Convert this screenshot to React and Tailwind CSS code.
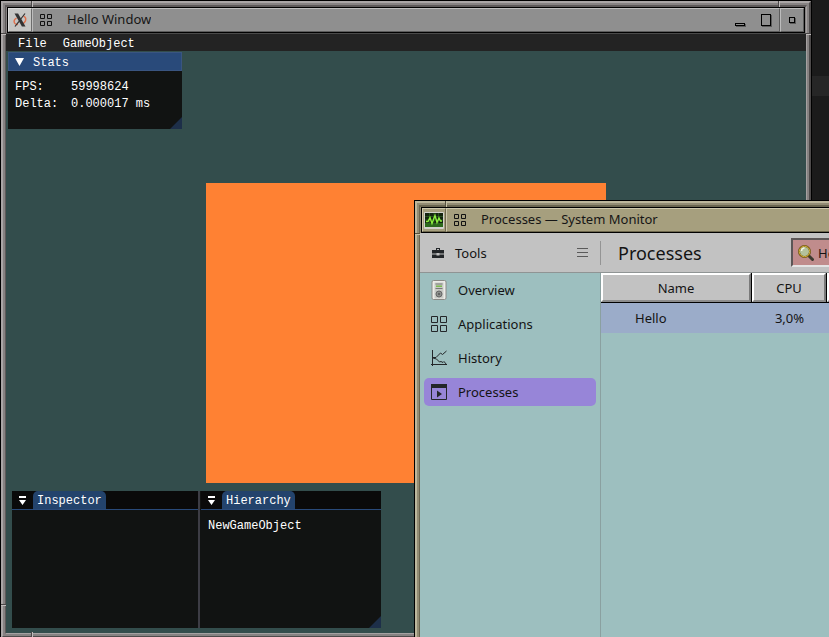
import React from "react";

const UI = "font-['Noto_Sans',sans-serif]";
const MONO = "font-['Liberation_Mono',monospace]";

const GREY = {
  frame: "bg-[#868282] border-t-[#aaa6a6] border-l-[#aaa6a6] border-r-[#4e4b4b] border-b-[#4e4b4b]",
  inner: "border-t-[#5e5a5a] border-l-[#5e5a5a] border-r-[#a5a1a1] border-b-[#a5a1a1]",
  bar: "bg-[#8f8f8f] border-t-[#bcbcbc] border-l-[#bcbcbc] border-r-[#5c5c5c] border-b-[#5c5c5c]",
  menu: "bg-[#c6c6c4] border-t-[#dcdcdc] border-l-[#dcdcdc] border-r-[#6c6c6c] border-b-[#6c6c6c]",
  light: "bg-[#c0bcbc]",
  dark: "bg-[#4a4747]",
};

const OLIVE = {
  frame: "bg-[#928c74] border-t-[#bdb79c] border-l-[#bdb79c] border-r-[#57523f] border-b-[#57523f]",
  inner: "border-t-[#6b6650] border-l-[#6b6650] border-r-[#b5ae91] border-b-[#b5ae91]",
  bar: "bg-[#a69f7e] border-t-[#cfc9ad] border-l-[#cfc9ad] border-r-[#6e684e] border-b-[#6e684e]",
  menu: "bg-[#a69f7e] border-t-[#cfc9ad] border-l-[#cfc9ad] border-r-[#6e684e] border-b-[#6e684e]",
  light: "bg-[#c8c2a6]",
  dark: "bg-[#57523f]",
};

function Notch({ theme, vertical, className }) {
  return (
    <span className={`absolute flex ${vertical ? "h-[6px] w-[2px]" : "h-[2px] w-[5px] flex-col"} ${className}`}>
      <i className={`flex-1 ${theme.dark}`} />
      <i className={`flex-1 ${theme.light}`} />
    </span>
  );
}

function GridGlyph() {
  return (
    <svg className="ml-[7px] h-3 w-3 shrink-0" viewBox="0 0 12 12" fill="none" stroke="#111" aria-hidden="true">
      <path d="M.5.5h4v4h-4zM7.5.5h4v4h-4zM.5 7.5h4v4h-4zM7.5 7.5h4v4h-4z" />
    </svg>
  );
}

function Window({ theme, className, icon, title, controls, children }) {
  return (
    <section aria-label={title} className={`absolute flex flex-col border border-black ${className}`}>
      <div className={`flex min-h-0 flex-1 flex-col border-2 ${theme.frame}`}>
        <div className="flex min-h-0 flex-1 flex-col p-[2px]">
          <div className={`flex min-h-0 flex-1 flex-col border-x border-b border-t-2 ${theme.inner}`}>
            <header className="mx-px flex h-[26px] shrink-0 border border-black">
              <button aria-label="Window menu" className={`flex w-6 shrink-0 items-center justify-center border ${theme.menu}`}>
                {icon}
              </button>
              <div className={`flex min-w-0 flex-1 items-center border ${theme.bar}`}>
                <GridGlyph />
                <h1 className="ml-[15px] truncate pb-[2px] text-[13px] leading-5 text-[#161616]">{title}</h1>
                {controls}
              </div>
              {controls && (
                <button aria-label="Close" className={`flex w-6 items-center justify-center border ${theme.bar}`}>
                  <i className="h-[6px] w-[6px] border border-black shadow-[1px_1px_0_#5a5a5a]" />
                </button>
              )}
            </header>
            {children}
          </div>
        </div>
      </div>
      <Notch theme={theme} vertical className="left-[30px] top-0" />
      <Notch theme={theme} className="left-0 top-8" />
      <Notch theme={theme} vertical className="right-[31px] top-0" />
      <Notch theme={theme} className="right-0 top-8" />
      <Notch theme={theme} vertical className="bottom-0 left-[30px]" />
      <Notch theme={theme} className="bottom-8 left-0" />
    </section>
  );
}

function XLogo() {
  return (
    <svg className="h-4 w-4" viewBox="0 0 16 16" aria-hidden="true">
      <path d="M4.500 6C1 8 1.200 12.500 6 12.500M11.500 4.200C15 5.500 14.500 10.500 9.500 12.300" fill="none" stroke="#e0714d" strokeWidth="1.400" />
      <path d="M2.500 1.500h3.600l7.400 13H9.900z" fill="#333" />
      <path d="M13 1.500 8.800 7M7 9.300 3 14.500" stroke="#333" strokeWidth="1.200" />
    </svg>
  );
}

function MonitorLogo() {
  return (
    <svg className="h-[17px] w-5 shrink-0" viewBox="0 0 20 17" aria-hidden="true">
      <rect width="20" height="17" rx="1" fill="#d2d2cc" />
      <rect x="1" y="1" width="18" height="14" fill="#14240f" />
      <path d="M1 11h18v4H1z" fill="#2c6a1b" />
      <path d="M1 4.500h18M1 8h18M1 11.500h18M5.500 1v14M10 1v14M14.500 1v14" stroke="#2f6322" strokeWidth=".7" />
      <path d="M2 9.500h2l2-4 2 6 3-8 2 7 2-4.500 1.500 3H18" fill="none" stroke="#8cf03f" strokeWidth="1.400" />
    </svg>
  );
}

function TabTriangle() {
  return (
    <svg className="h-[9px] w-[7px]" viewBox="0 0 7 9" fill="#fff" aria-hidden="true">
      <path d="M0 0h7v2H0zM0 4h7L3.500 9z" />
    </svg>
  );
}

function DockPanel({ title, className, children }) {
  return (
    <section className={`relative bg-[#111312] ${className}`}>
      <div className="flex h-[19px] items-center border-b border-[#294a7a] bg-[#0a0a0a] pl-[7px]">
        <button aria-label={`${title} options`}><TabTriangle /></button>
        <button className="ml-[7px] h-[18px] rounded-t-[5px] bg-[#23436c] px-1 pt-[2px] leading-4">{title}</button>
      </div>
      {children}
    </section>
  );
}

function Grip() {
  return (
    <svg className="absolute bottom-0 right-0 h-3 w-3" viewBox="0 0 12 12" aria-hidden="true">
      <path d="M12 0v12H0z" fill="#1d2f49" />
    </svg>
  );
}

function HelloWindow() {
  return (
    <Window
      theme={GREY}
      title="Hello Window"
      className="-bottom-[2px] left-0 right-[17px] top-0"
      icon={<XLogo />}
      controls={
        <div className="ml-auto flex h-full items-center gap-4 pr-2">
          <button aria-label="Minimize" className="flex h-3 items-end">
            <i className="h-[3px] w-[10px] border border-black shadow-[1px_1px_0_#5a5a5a]" />
          </button>
          <button aria-label="Maximize">
            <i className="block h-3 w-[10px] border border-black shadow-[1px_1px_0_#5a5a5a]" />
          </button>
        </div>
      }
    >
      <div className={`relative flex min-h-0 flex-1 items-center justify-center overflow-hidden bg-[#334d4c] text-[12px] text-white ${MONO}`}>
        <div className="h-[300px] w-[400px] bg-[#ff8133]" />

        <nav className="absolute inset-x-0 top-0 flex h-[18px] items-center gap-4 border-t border-[#4a4a4a] bg-[#232323] px-3 pt-[2px]">
          <button>File</button>
          <button>GameObject</button>
        </nav>

        <section className="absolute left-[2px] top-[19px] h-[77px] w-[174px] bg-[#111312]">
          <div className="flex h-[19px] items-center gap-[9px] border border-[#3a5580] bg-[#294a7a] pl-[6px]">
            <svg className="h-2 w-[9px]" viewBox="0 0 9 8" fill="#fff" aria-hidden="true"><path d="M0 0h9L4.500 8z" /></svg>
            <h2 className="pt-[2px] leading-4">Stats</h2>
          </div>
          <dl className="grid grid-cols-[56px_1fr] px-[7px] pt-2 leading-[17px]">
            <dt>FPS:</dt><dd>59998624</dd>
            <dt>Delta:</dt><dd>0.000017 ms</dd>
          </dl>
          <Grip />
        </section>

        <div className="absolute bottom-[5px] left-[6px] flex h-[137px]">
          <DockPanel title="Inspector" className="w-[186px]" />
          <div className="w-[3px] border-r border-[#111312] bg-[#3d3d45]" />
          <DockPanel title="Hierarchy" className="w-[180px]">
            <p className="px-[7px] pt-[7px] leading-[18px]">NewGameObject</p>
            <Grip />
          </DockPanel>
        </div>
      </div>
    </Window>
  );
}

const NAV = [
  {
    label: "Overview",
    icon: (
      <svg className="h-5 w-4" viewBox="0 0 16 20" aria-hidden="true">
        <rect x="1" y=".5" width="14" height="19" rx="1.500" fill="#ecece8" stroke="#8a8a86" />
        <rect x="3.500" y="2.500" width="9" height="16" fill="#c9cbc6" />
        <path d="M4.500 4h7M4.500 8.500h7" stroke="#777" />
        <path d="M5 6.200h6" stroke="#79b94a" strokeWidth="1.500" />
        <circle cx="8" cy="14" r="3" fill="#8d908c" stroke="#666" />
        <circle cx="8" cy="14" r="1" fill="#555" />
      </svg>
    ),
  },
  {
    label: "Applications",
    icon: (
      <svg className="h-4 w-4" viewBox="0 0 16 16" fill="none" stroke="#232629" aria-hidden="true">
        <path d="M.5.5h6v6h-6zM9.500.5h6v6h-6zM.5 9.500h6v6h-6zM9.500 9.500h6v6h-6z" />
      </svg>
    ),
  },
  {
    label: "History",
    icon: (
      <svg className="h-4 w-4" viewBox="0 0 16 16" fill="none" stroke="#232629" aria-hidden="true">
        <path d="M1.500 0v16M0 14.500h16M2 7.500h3l4.500-4.500 2 1.500L15.500 1M2 8l3.500 1 3 3 1.500-.5 2 1 1-1 2.500 3" />
      </svg>
    ),
  },
  {
    label: "Processes",
    active: true,
    icon: (
      <svg className="h-4 w-4" viewBox="0 0 16 16" aria-hidden="true">
        <path d="M.5.5h15v15H.5z" fill="none" stroke="#232629" />
        <path d="M0 0h16v4H0zM6 6.500l5 3.500-5 3.500z" fill="#232629" />
      </svg>
    ),
  },
];

const HEAD = "h-[30px] border-b border-r border-black p-0 font-normal";
const HEAD_IN =
  "flex h-[29px] items-center justify-center border-2 border-b-[#8c8c8c] border-l-white border-r-[#7a7a7a] border-t-white bg-[#c2c2c2] pt-[2px]";

function SystemMonitor() {
  return (
    <Window
      theme={OLIVE}
      title="Processes — System Monitor"
      className="-bottom-10 -right-[200px] left-[414px] top-[200px]"
      icon={<MonitorLogo />}
    >
      <div className="flex min-h-0 flex-1 flex-col bg-[#9dbfbf] text-[13px] text-[#141414]">
        <div className="flex h-10 shrink-0 items-center border-b border-[#8f9494] bg-[#c2c2c2]">
          <div className="flex h-6 w-[181px] shrink-0 items-center border-r border-[#949494] px-3">
            <svg className="h-3 w-3" viewBox="0 0 12 12" fill="#232629" aria-hidden="true">
              <path d="M4 1h4v2h4v3.500H7.500V6h-3v.5H0V3h4zM5 2v1h2V2zM0 7.500h4.500v1h3v-1H12V11H0z" fillRule="evenodd" />
            </svg>
            <span className="ml-[11px] pt-[2px]">Tools</span>
            <button aria-label="Menu" className="ml-auto">
              <svg className="h-[11px] w-[11px]" viewBox="0 0 11 11" stroke="#5a5a5a" aria-hidden="true">
                <path d="M0 1.500h11M0 5.500h11M0 9.500h11" />
              </svg>
            </button>
          </div>
          <h2 className="w-[190px] shrink-0 pl-[17px] text-[18px] leading-6">Processes</h2>
          <label className="flex h-[29px] w-[200px] items-center border-2 border-b-[#e4e4e4] border-l-[#5c5656] border-r-[#e4e4e4] border-t-[#5c5656] bg-[#c08c8c] pl-[5px]">
            <span className="sr-only">Search</span>
            <svg className="h-4 w-4 shrink-0" viewBox="0 0 16 16" aria-hidden="true">
              <path d="M10.500 10.500l4 4" stroke="#3d3a30" strokeWidth="3" strokeLinecap="round" />
              <circle cx="6.500" cy="6.500" r="5.500" fill="#b4c29c" stroke="#6b5414" strokeWidth="2" />
              <circle cx="6.500" cy="6.500" r="5.300" fill="none" stroke="#d9b53c" />
              <path d="M3.500 6a3 3 0 0 1 3-3" fill="none" stroke="#f2f5e4" strokeWidth="1.500" />
            </svg>
            <input className="ml-1 w-full min-w-0 bg-transparent pt-[2px] outline-none" defaultValue="Hello" />
          </label>
        </div>

        <div className="flex min-h-0 flex-1">
          <nav className="flex w-[181px] shrink-0 flex-col gap-[6px] border-r border-[#8aa0a0] px-1 pt-[3px]">
            {NAV.map((item) => (
              <a
                key={item.label}
                href="#"
                className={`flex h-7 items-center gap-[11px] rounded-[5px] px-[7px] ${item.active ? "bg-[#9785d8]" : ""}`}
              >
                {item.icon}
                <span className="pt-px">{item.label}</span>
              </a>
            ))}
          </nav>
          <div className="min-w-0 flex-1">
            <table className="w-full table-fixed border-separate border-spacing-0 text-center">
              <thead>
                <tr>
                  <th className={`w-[151px] ${HEAD}`}><div className={HEAD_IN}>Name</div></th>
                  <th className={`w-[75px] ${HEAD}`}><div className={HEAD_IN}>CPU</div></th>
                  <th className={HEAD} aria-label="Memory"><div className={HEAD_IN} /></th>
                </tr>
              </thead>
              <tbody>
                <tr className="bg-[#9bacc9]">
                  <td className="h-[30px] p-0 pl-[34px] pt-[2px] text-left">Hello</td>
                  <td className="p-0 pt-[2px]">3,0%</td>
                  <td className="p-0" />
                </tr>
              </tbody>
            </table>
          </div>
        </div>
      </div>
    </Window>
  );
}

export default function App() {
  return (
    <main className={`relative h-screen overflow-hidden bg-[#1b1b1b] ${UI}`}>
      <div className="h-[76px]" />
      <div className="h-5 bg-[#262626]" />
      <HelloWindow />
      <SystemMonitor />
    </main>
  );
}
